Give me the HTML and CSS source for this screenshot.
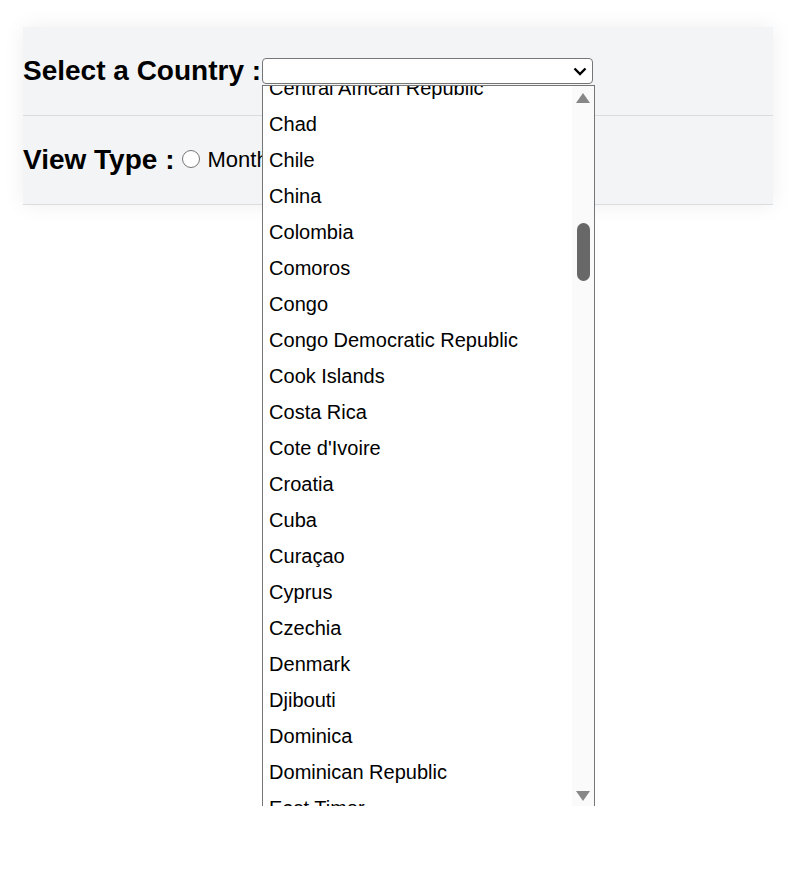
FILE: index.html
```html
<!DOCTYPE html>
<html lang="en">
<head>
<meta charset="utf-8">
<title>Select a Country</title>
<link rel="stylesheet" href="styles.css">
</head>
<body>
<div class="page">
<div class="panel">
  <div class="row">
    <span class="label">Select a Country :</span>
    <div class="select-wrap">
      <div class="select-box">
        <svg class="chev" width="14" height="9" viewBox="0 0 14 9"><path d="M1.5 1.5 L7 7 L12.5 1.5" fill="none" stroke="#000" stroke-width="2.4"/></svg>
      </div>
      <div class="popup">
        <ul class="options">
          <li>Central African Republic</li>
          <li>Chad</li>
          <li>Chile</li>
          <li>China</li>
          <li>Colombia</li>
          <li>Comoros</li>
          <li>Congo</li>
          <li>Congo Democratic Republic</li>
          <li>Cook Islands</li>
          <li>Costa Rica</li>
          <li>Cote d'Ivoire</li>
          <li>Croatia</li>
          <li>Cuba</li>
          <li>Curaçao</li>
          <li>Cyprus</li>
          <li>Czechia</li>
          <li>Denmark</li>
          <li>Djibouti</li>
          <li>Dominica</li>
          <li>Dominican Republic</li>
          <li>East Timor</li>
        </ul>
        <div class="scrollbar">
          <span class="arrow-up"></span>
          <span class="thumb"></span>
          <span class="arrow-down"></span>
        </div>
      </div>
    </div>
  </div>
  <div class="row">
    <span class="label">View Type :</span>
    <span class="radio"></span><span class="opt">Monthly</span>
    <span class="radio"></span><span class="opt">Yearly</span>
  </div>
</div>
</div>
</body>
</html>
```
FILE: styles.css
```css
html, body {
  margin: 0;
  padding: 0;
  background: #ffffff;
}
html {
  height: 100%;
}
body {
  min-height: 887px;
  font-family: "Liberation Sans", Arial, sans-serif;
  color: #000;
}
.page {
  min-height: 887px;
  padding: 27px 36px 0 23px;
  box-sizing: border-box;
}
.panel {
  background: #f3f4f6;
  box-shadow: 0 0 20px rgba(0, 0, 0, 0.07);
}
.row {
  height: 88px;
  display: flex;
  align-items: center;
  border-bottom: 1px solid #dcdcdc;
}
.label {
  font-size: 28px;
  font-weight: bold;
  white-space: nowrap;
}
.select-wrap {
  position: relative;
  margin-left: 1px;
}
.select-box {
  box-sizing: border-box;
  width: 331px;
  height: 26px;
  border: 1px solid #767676;
  border-radius: 4px;
  background: #fff;
  display: flex;
  align-items: center;
  justify-content: flex-end;
  padding-right: 5px;
}
.chev {
  display: block;
}
.popup {
  position: absolute;
  top: 27px;
  left: 0;
  box-sizing: border-box;
  width: 333px;
  height: 721px;
  border: 1px solid #767676;
  border-bottom: none;
  background: #fff;
  overflow: hidden;
  z-index: 10;
}
.options {
  list-style: none;
  margin: -16px 0 0 0;
  padding: 0;
}
.options li {
  height: 36px;
  line-height: 36px;
  padding-left: 6px;
  font-size: 20px;
  white-space: nowrap;
}
.scrollbar {
  position: absolute;
  top: 0;
  right: 0;
  bottom: 0;
  width: 22px;
  background: #fafafa;
}
.arrow-up {
  position: absolute;
  top: 7px;
  left: 4px;
  width: 0;
  height: 0;
  border-left: 7.5px solid transparent;
  border-right: 7.5px solid transparent;
  border-bottom: 10px solid #878787;
}
.arrow-down {
  position: absolute;
  top: 705px;
  left: 4px;
  width: 0;
  height: 0;
  border-left: 7.5px solid transparent;
  border-right: 7.5px solid transparent;
  border-top: 10px solid #878787;
}
.thumb {
  position: absolute;
  top: 137px;
  left: 5px;
  width: 13px;
  height: 58px;
  border-radius: 7px;
  background: #686868;
}
.radio {
  box-sizing: border-box;
  width: 18px;
  height: 18px;
  border: 1px solid #767676;
  border-radius: 50%;
  background: #fff;
  margin: -2px 7px 0 8px;
  flex: none;
}
.opt {
  font-size: 22px;
}
```
